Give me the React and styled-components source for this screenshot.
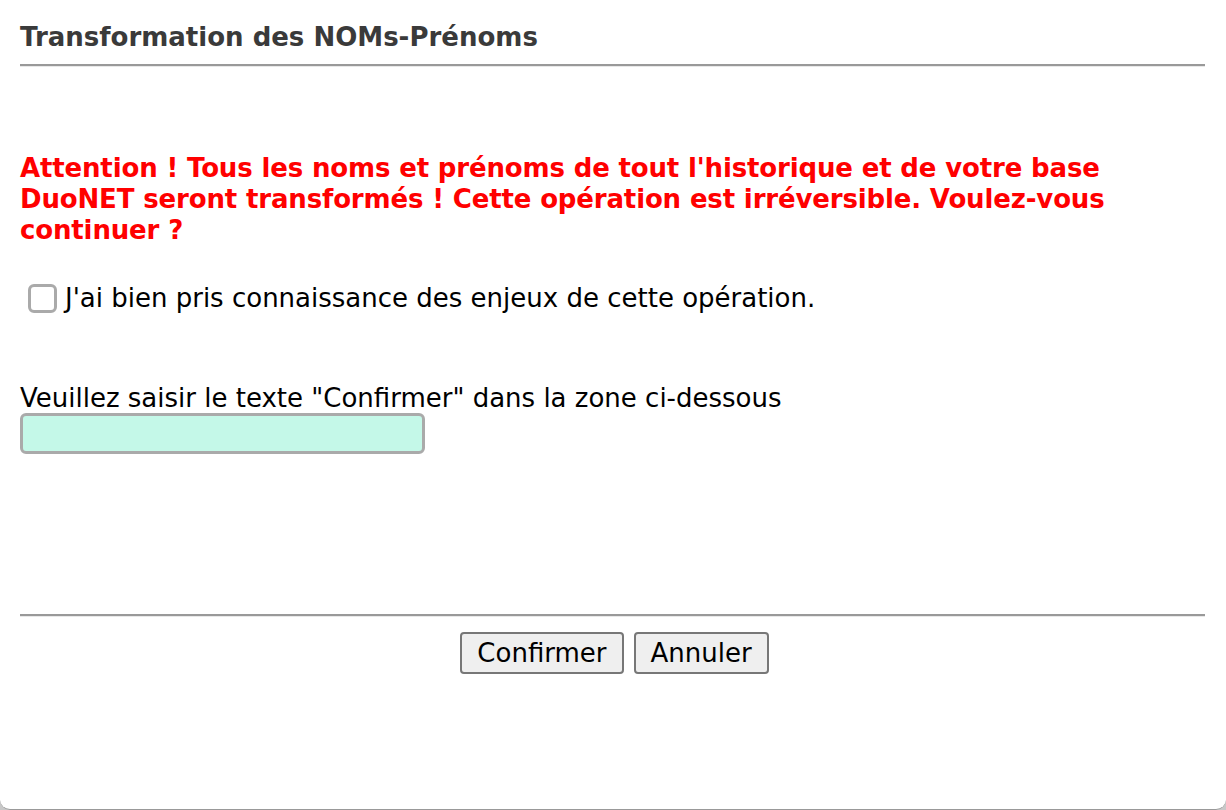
import styled, { createGlobalStyle } from 'styled-components'

const Global = createGlobalStyle`
    html, body {
        margin: 0;
        padding: 0;
        background: #c8c8c8;
    }
    body {
        font-family: "DejaVu Sans", Verdana, sans-serif;
    }
`

export default function App() {
    return (
        <>
            <Global />
            <Dialog>
                <Title>Transformation des NOMs-Prénoms</Title>
                <Rule />

                <Warning>
                    Attention ! Tous les noms et prénoms de tout l'historique et de votre base<br />
                    DuoNET seront transformés ! Cette opération est irréversible. Voulez-vous<br />
                    continuer ?
                </Warning>

                <CheckRow>
                    <Check type="checkbox" />
                    <span>J'ai bien pris connaissance des enjeux de cette opération.</span>
                </CheckRow>

                <Prompt>Veuillez saisir le texte "Confirmer" dans la zone ci-dessous</Prompt>
                <Field type="text" />

                <Footer>
                    <Rule />
                    <Buttons>
                        <Button>Confirmer</Button>
                        <Button>Annuler</Button>
                    </Buttons>
                </Footer>
            </Dialog>
        </>
    );
}

const Dialog = styled.div`
    box-sizing: border-box;
    height: 810px;
    padding: 21px 21px 0 20px;
    background: #fff;
    border-bottom: 1px solid #999;
    border-radius: 0 0 10px 10px;
    display: flex;
    flex-direction: column;
    align-items: flex-start;
`

const Title = styled.h1`
    margin: 0;
    font-size: 26px;
    line-height: 32px;
    font-weight: 700;
    color: #3a3a3a;
`

const Rule = styled.hr`
    align-self: stretch;
    width: 100%;
    box-sizing: border-box;
    height: 0;
    margin: 11px 0 0;
    border: none;
    border-top: 2px solid #999;
    border-bottom: 1px solid #e8e8e8;
`

const Warning = styled.p`
    margin: 86px 0 0;
    font-size: 26px;
    letter-spacing: -0.15px;
    line-height: 31px;
    font-weight: 700;
    color: #ff0000;
`

const CheckRow = styled.label`
    display: flex;
    align-items: center;
    gap: 8px;
    margin: 37px 0 0 8px;
    font-size: 26px;
    line-height: 30px;
    color: #000;
`

const Check = styled.input`
    appearance: none;
    margin: 0;
    width: 29px;
    height: 29px;
    box-sizing: border-box;
    border: 3px solid #aaa;
    border-radius: 6px;
    background: #fff;
`

const Prompt = styled.div`
    margin-top: 70px;
    font-size: 26px;
    line-height: 30px;
    color: #000;
`

const Field = styled.input`
    box-sizing: border-box;
    width: 405px;
    height: 41px;
    margin: 0;
    border: 3px solid #aaa;
    border-radius: 6px;
    background: #c4f8e8;
    outline: none;
`

const Footer = styled.div`
    align-self: stretch;
    margin-top: 149px;
    display: flex;
    flex-direction: column;
`

const Buttons = styled.div`
    display: flex;
    justify-content: center;
    gap: 10px;
    margin-top: 15px;
    padding-left: 4px;
`

const Button = styled.button`
    height: 42px;
    padding: 0 15px;
    font-family: "DejaVu Sans", Verdana, sans-serif;
    font-size: 26px;
    color: #000;
    background: #efefef;
    border: 2px solid #777;
    border-radius: 4px;
`
